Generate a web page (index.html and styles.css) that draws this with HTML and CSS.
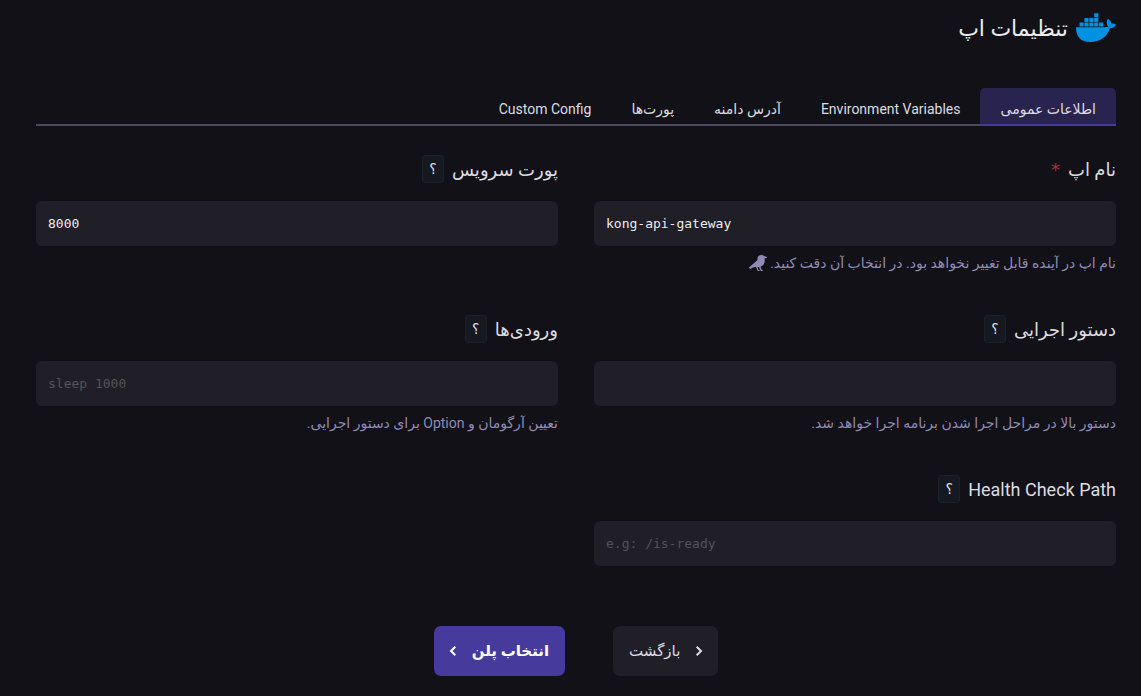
FILE: index.html
```html
<!DOCTYPE html>
<html lang="fa" dir="rtl">
<head>
<meta charset="utf-8">
<meta name="viewport" content="width=device-width, initial-scale=1">
<title>تنظیمات اپ</title>
<link rel="stylesheet" href="styles.css">
</head>
<body>
<main class="page">
  <header class="page-header">
    <svg class="logo" viewBox="0 0 40 30" aria-hidden="true">
      <path d="M0 14.200h28.500c1.700 0 2.900-.2 3.600-.6-1.800-2.600-1.900-5.500-.2-7.900 2 1.200 3.300 2.900 3.600 4.900 1.600-.3 3.200 0 4.500 1-1 2.600-3.200 3.700-6 3.700C31 24 24.300 29 14 29 4.500 29-.2 23.500 0 14.200z"/>
      <path d="M3.500 9.600h4.200v4H3.500zM8.400 9.600h4.200v4H8.400zM13.300 9.600h4.200v4h-4.200zM18.200 9.600h4.200v4h-4.200zM23.100 9.600h4.200v4h-4.200zM8.400 4.900h4.200v4H8.400zM13.300 4.900h4.200v4h-4.200zM18.200 4.900h4.200v4h-4.200zM18.200.2h4.200v4h-4.200z"/>
    </svg>
    <h1 class="title">تنظیمات اپ</h1>
  </header>

  <nav class="tabs">
    <a class="tab tab-active" href="#general" aria-current="page">اطلاعات عمومی</a>
    <a class="tab" href="#env">Environment Variables</a>
    <a class="tab" href="#domain">آدرس دامنه</a>
    <a class="tab" href="#ports">پورت‌ها</a>
    <a class="tab" href="#custom">Custom Config</a>
  </nav>

  <form class="form">
    <div class="fields">
      <div class="field">
        <div class="label-row">
          <label for="app-name">نام اپ</label>
          <span class="required">*</span>
        </div>
        <input class="input" id="app-name" type="text" dir="ltr" value="kong-api-gateway">
        <p class="hint">نام اپ در آینده قابل تغییر نخواهد بود. در انتخاب آن دقت کنید.
          <svg class="bird" viewBox="0 0 18 16" aria-hidden="true"><path d="M0 12.500 8.500 5V3.400C8.500 1.300 10.200 0 12.300 0c1.500 0 2.700.5 3.300 1.200l2.400.9v.8l-2.300.3v2.600c0 3.200-1.900 5.300-4.300 6l1.300 3 1 .3v.8h-1.900L9.900 12H8.400l1.200 2.900 1 .3v.8H8.700L7 12.100l-2.400.2L1 14z"/></svg>
        </p>
      </div>

      <div class="field">
        <div class="label-row">
          <label for="port">پورت سرویس</label>
          <button class="help" type="button">؟</button>
        </div>
        <input class="input" id="port" type="text" dir="ltr" value="8000">
      </div>

      <div class="field">
        <div class="label-row">
          <label for="command">دستور اجرایی</label>
          <button class="help" type="button">؟</button>
        </div>
        <input class="input" id="command" type="text" dir="ltr">
        <p class="hint">دستور بالا در مراحل اجرا شدن برنامه اجرا خواهد شد.</p>
      </div>

      <div class="field">
        <div class="label-row">
          <label for="args">ورودی‌ها</label>
          <button class="help" type="button">؟</button>
        </div>
        <input class="input" id="args" type="text" dir="ltr" placeholder="sleep 1000">
        <p class="hint">تعیین آرگومان و Option برای دستور اجرایی.</p>
      </div>

      <div class="field">
        <div class="label-row">
          <label for="health">Health Check Path</label>
          <button class="help" type="button">؟</button>
        </div>
        <input class="input" id="health" type="text" dir="ltr" placeholder="e.g: /is-ready">
      </div>
    </div>

    <div class="actions">
      <button class="btn btn-back" type="button">
        <svg class="chevron" viewBox="0 0 6 10" aria-hidden="true"><path d="M.7.700 5 5 .7 9.300"/></svg>
        بازگشت
      </button>
      <button class="btn btn-next" type="submit">
        انتخاب پلن
        <svg class="chevron" viewBox="0 0 6 10" aria-hidden="true"><path d="M5.300.700 1 5l4.300 4.300"/></svg>
      </button>
    </div>
  </form>
</main>
</body>
</html>
```
FILE: styles.css
```css
* {
  box-sizing: border-box;
}

body {
  margin: 0;
  background: #121118;
  color: #dcdce2;
  font-family: Roboto, "DejaVu Sans", sans-serif;
}

.page {
  padding: 8px 25px 20px 36px;
}

.page-header {
  display: flex;
  align-items: center;
  gap: 8px;
  height: 40px;
}

.logo {
  width: 40px;
  height: 30px;
  fill: #0091e2;
}

.title {
  margin: 0;
  color: #ececf1;
  font-size: 22px;
  font-weight: 400;
}

.tabs {
  display: flex;
  margin-top: 40px;
  border-bottom: 2px solid #4c4a5a;
}

.tab {
  height: 38px;
  margin-bottom: -2px;
  padding: 5px 20px 0;
  border-bottom: 2px solid transparent;
  border-radius: 5px 5px 0 0;
  color: #dcdce2;
  font-size: 14px;
  line-height: 32px;
  text-decoration: none;
  white-space: nowrap;
}

.tab-active {
  border-bottom-color: #463a9c;
  background: #292350;
}

.fields {
  display: grid;
  grid-template-columns: 1fr 1fr;
  grid-auto-rows: 160px;
  column-gap: 36px;
  padding-top: 28px;
}

.label-row {
  display: flex;
  align-items: center;
  gap: 8px;
  height: 30px;
  font-size: 18px;
}

.required {
  color: #a8323c;
  font-family: "DejaVu Sans", sans-serif;
}

.help {
  width: 22px;
  height: 28px;
  padding: 0;
  border: 1px solid #1d2028;
  border-radius: 3px;
  background: #151a20;
  color: #dcdce2;
  font-family: inherit;
  font-size: 14px;
}

.input {
  display: block;
  width: 100%;
  height: 45px;
  margin-top: 17px;
  padding: 0 12px;
  border: 0;
  border-radius: 6px;
  outline: 0;
  background: #201f27;
  color: #ececf1;
  font-family: "DejaVu Sans Mono", monospace;
  font-size: 13px;
}

.input::placeholder {
  color: #54525a;
}

.hint {
  margin: 7px 0 0;
  color: #8f8bb3;
  font-size: 14px;
  line-height: 20px;
}

.bird {
  width: 18px;
  height: 16px;
  vertical-align: -3px;
  fill: #8f8bb3;
}

.actions {
  display: flex;
  justify-content: center;
  gap: 48px;
  margin-top: -8px;
}

.btn {
  display: flex;
  align-items: center;
  gap: 16px;
  height: 50px;
  padding: 0 16px;
  border: 0;
  border-radius: 7px;
  font-family: inherit;
  font-size: 15px;
}

.btn-back {
  background: #201f27;
  color: #dcdce2;
}

.btn-next {
  background: #463a9c;
  color: #fff;
  font-weight: 700;
}

.chevron {
  width: 6px;
  height: 10px;
  overflow: visible;
  fill: none;
  stroke: currentColor;
  stroke-width: 2;
}
```
